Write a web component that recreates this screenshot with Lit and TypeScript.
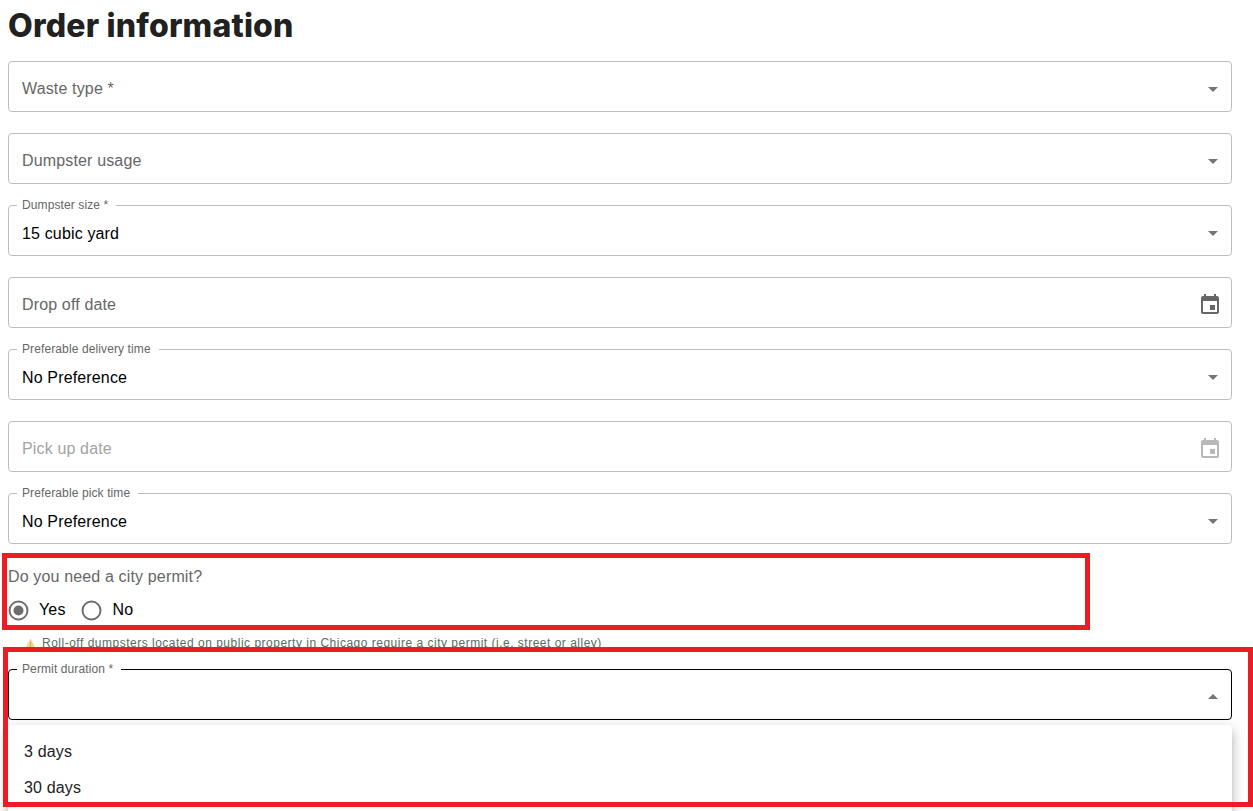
import { LitElement, html, css, svg } from "lit";
import { customElement } from "lit/decorators.js";

const arrowDown = svg`<path d="M7 10l5 5 5-5z"/>`;
const arrowUp = svg`<path d="M7 14l5-5 5 5z"/>`;
const event = svg`<path d="M17 12h-5v5h5v-5zM16 1v2H8V1H6v2H5c-1.11 0-1.99.9-1.99 2L3 19c0 1.1.89 2 2 2h14c1.1 0 2-.9 2-2V5c0-1.1-.9-2-2-2h-1V1h-2zm3 18H5V8h14v11z"/>`;

type F = { label: string; value?: string; float?: boolean; icon: "select" | "date"; disabled?: boolean };
const fields: F[] = [
  { label: "Waste type *", icon: "select" },
  { label: "Dumpster usage", icon: "select" },
  { label: "Dumpster size *", value: "15 cubic yard", float: true, icon: "select" },
  { label: "Drop off date", icon: "date" },
  { label: "Preferable delivery time", value: "No Preference", float: true, icon: "select" },
  { label: "Pick up date", icon: "date", disabled: true },
  { label: "Preferable pick time", value: "No Preference", float: true, icon: "select" },
];

@customElement("app-root")
export class AppRoot extends LitElement {
  static styles = css`
    :host {
      display: block;
      position: relative;
      height: 811px;
      overflow: hidden;
      background: #fff;
      font-family: "Liberation Sans", Arial, sans-serif;
      letter-spacing: 0.15px;
      color: #000;
    }
    .form {
      display: flex;
      flex-direction: column;
      padding: 0 21px 0 8px;
    }
    h1 {
      margin: 0;
      height: 61px;
      box-sizing: border-box;
      padding-top: 6px;
      font: 800 32px/39px Inter, "Liberation Sans", sans-serif;
      letter-spacing: 0.18px;
      color: #212121;
    }
    .fields {
      display: flex;
      flex-direction: column;
      gap: 21px;
    }
    .field {
      position: relative;
      box-sizing: border-box;
      height: 51px;
      display: flex;
      align-items: center;
      justify-content: space-between;
      padding: 0 6px 0 13px;
      border: 1px solid #bdbdbd;
      border-radius: 4px;
      font-size: 16px;
    }
    .field.focused { border-color: #000; }
    .placeholder { color: #666; padding-top: 4px; }
    .value { padding-top: 6px; }
    .disabled .placeholder { color: #a3a3a3; }
    .float {
      position: absolute;
      top: -8px;
      left: 8px;
      padding: 0 8px 0 5px;
      background: #fff;
      font-size: 12px;
      line-height: 14px;
      letter-spacing: 0.11px;
      color: #666;
    }
    svg.arrow { width: 24px; height: 24px; fill: #757575; margin-top: 4px; }
    svg.cal { width: 24px; height: 24px; fill: #666; margin: 4px 3px 0 0; }
    .disabled svg.cal { fill: #b8b8b8; }
    .permit {
      display: flex;
      flex-direction: column;
      margin-top: 24px;
    }
    .q { font-size: 16px; line-height: 18px; color: #666; }
    .radios {
      display: flex;
      align-items: center;
      gap: 16px;
      margin-top: 13px;
      height: 22px;
      font-size: 16px;
    }
    .radio { display: flex; align-items: center; gap: 10px; }
    .radio + .radio { gap: 11px; }
    .radio:first-child { margin-right: -1px; }
    .dot { width: 21px; height: 21px; fill: none; stroke: #6e6e6e; stroke-width: 2; }
    .dot circle.in { fill: #6e6e6e; stroke: none; }
    .hint {
      display: flex;
      align-items: center;
      gap: 6px;
      margin: 15px 0 0 17px;
      height: 14px;
      font-size: 12px;
      line-height: 14px;
      letter-spacing: 0.5px;
      color: #666;
    }
    .hint svg { width: 11px; height: 11px; flex: none; }
    .duration { margin-top: 19px; }
    .menu {
      position: absolute;
      left: 8px;
      top: 725px;
      width: 1224px;
      padding: 8px 0;
      box-sizing: border-box;
      background: #fff;
      border-radius: 4px;
      box-shadow: 0 5px 5px -3px rgba(0,0,0,.2), 0 8px 10px 1px rgba(0,0,0,.14), 0 3px 14px 2px rgba(0,0,0,.12);
    }
    .item {
      height: 36px;
      line-height: 38px;
      padding-left: 16px;
      font-size: 16px;
      color: #212121;
    }
    .mark {
      position: absolute;
      box-sizing: border-box;
      border: 5px solid #ed1c24;
    }
    .m1 { left: 2px; top: 553px; width: 1088px; height: 77px; }
    .m2 { left: 3px; top: 647px; width: 1250px; height: 160px; }
  `;

  private field(f: F) {
    return html`<div class="field ${f.disabled ? "disabled" : ""}">
      ${f.float ? html`<span class="float">${f.label}</span><span class="value">${f.value}</span>` : html`<span class="placeholder">${f.label}</span>`}
      ${f.icon === "select"
        ? html`<svg class="arrow" viewBox="0 0 24 24">${arrowDown}</svg>`
        : html`<svg class="cal" viewBox="0 0 24 24">${event}</svg>`}
    </div>`;
  }

  render() {
    return html`
      <div class="form">
        <h1>Order information</h1>
        <div class="fields">${fields.map((f) => this.field(f))}</div>
        <div class="permit">
          <div class="q">Do you need a city permit?</div>
          <div class="radios">
            <div class="radio">
              <svg class="dot" viewBox="0 0 21 21"><circle cx="10.5" cy="10.5" r="9"/><circle class="in" cx="10.5" cy="10.5" r="5"/></svg>
              <span>Yes</span>
            </div>
            <div class="radio">
              <svg class="dot" viewBox="0 0 21 21"><circle cx="10.5" cy="10.5" r="9"/></svg>
              <span>No</span>
            </div>
          </div>
          <div class="hint">
            <svg viewBox="0 0 12 12"><path d="M6 .5L11.8 11.5H.2z" fill="#f8d28e"/><path d="M5.5 4.5h1v3.5h-1zM5.5 8.8h1v1h-1z" fill="#c9a36a"/></svg>
            <span>Roll-off dumpsters located on public property in Chicago require a city permit (i.e. street or alley)</span>
          </div>
        </div>
        <div class="field focused duration">
          <span class="float">Permit duration *</span>
          <span></span>
          <svg class="arrow" viewBox="0 0 24 24">${arrowUp}</svg>
        </div>
      </div>
      <div class="menu">
        <div class="item">3 days</div>
        <div class="item">30 days</div>
      </div>
      <div class="mark m1"></div>
      <div class="mark m2"></div>
    `;
  }
}
